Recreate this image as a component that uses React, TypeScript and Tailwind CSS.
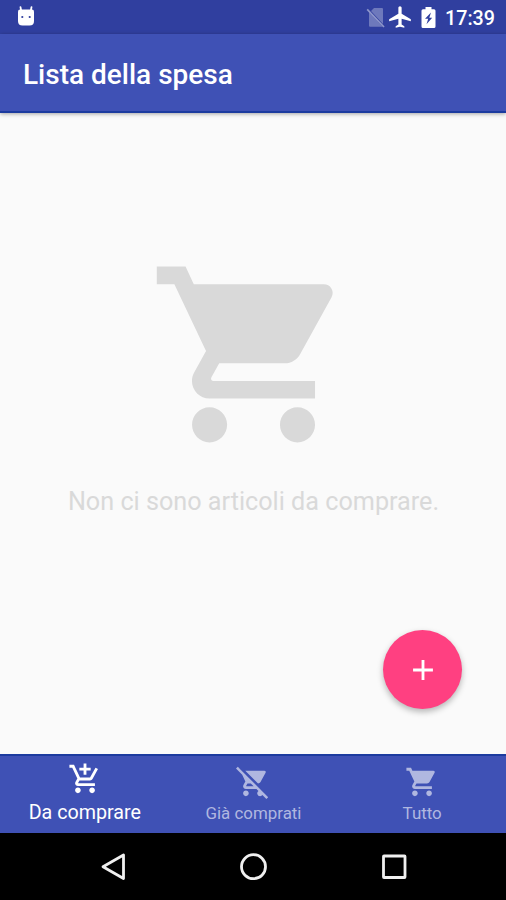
import type { ReactNode } from 'react';
import type { IconType } from 'react-icons';
import {
    MdAdd,
    MdAddShoppingCart,
    MdAirplanemodeActive,
    MdRemoveShoppingCart,
    MdShoppingCart,
} from 'react-icons/md';

interface Tab {
    label: string;
    icon: IconType;
}

const TABS: Tab[] = [
    { label: 'Da comprare', icon: MdAddShoppingCart },
    { label: 'Già comprati', icon: MdRemoveShoppingCart },
    { label: 'Tutto', icon: MdShoppingCart },
];

export default function App() {
    return (
        <div className="flex h-[900px] w-[506px] flex-col overflow-hidden bg-[#fafafa] font-['Roboto',sans-serif]">
            <StatusBar />
            <header className="z-10 flex h-[79px] shrink-0 items-center border-b-2 border-[#1c3b9f] bg-[#3f51b5] pl-[23px] pt-[5px] shadow-[0_1px_4px_rgba(0,0,0,0.35)]">
                <h1 className="text-[28px] font-medium leading-none text-white">Lista della spesa</h1>
            </header>
            <EmptyList message="Non ci sono articoli da comprare." />
            <nav className="grid h-[79px] shrink-0 grid-cols-3 border-t-2 border-[#1c3b9f] bg-[#3f51b5]">
                {TABS.map((tab, i) => (
                    <TabButton key={tab.label} tab={tab} active={i === 0} />
                ))}
            </nav>
            <SystemNav />
        </div>
    );
}

function StatusBar() {
    return (
        <div className="flex h-[34px] shrink-0 items-center justify-between bg-[#303f9f] pl-[17px] pr-[11px] text-white">
            <svg className="-mt-px h-[21px] w-[18px]" viewBox="0 0 18 21" fill="currentColor">
                <path d="M3.5 1.2 4.2 5M14.5 1.2 13.8 5" stroke="currentColor" strokeWidth="1.8" strokeLinecap="round" />
                <path d="M3 3.6h12q2 0 2 2v9.4q0 4.5-4.5 4.500H5.5Q1 19.5 1 15V5.6q0-2 2-2z" />
                <circle cx="5.3" cy="11" r="1.1" fill="#303f9f" />
                <circle cx="12.7" cy="11" r="1.1" fill="#303f9f" />
            </svg>
            <div className="flex items-center">
                <svg className="h-[21px] w-[19px]" viewBox="0 0 19 21">
                    <path d="M8 1h8q1 0 1 1v15L5 4zM3 5.5 16.5 19.8H4q-1 0-1-1z" fill="#fff" opacity=".3" />
                    <path d="M1.2 2.4 18 20" stroke="#fff" strokeWidth="1.7" opacity=".45" />
                </svg>
                <MdAirplanemodeActive className="ml-[2px] size-[26px]" />
                <svg className="ml-[8px] h-[21px] w-[15px]" viewBox="0 0 15 21" fill="currentColor">
                    <path d="M4.5 0h6v2.2H13q1.5 0 1.5 1.5v15.8q0 1.5-1.5 1.5H2Q.5 21 .5 19.5V3.7q0-1.5 1.5-1.5h2.5z" />
                    <path d="M10 5.5 4 11.8h3.2L5.5 17.2l5.7-6.4H8.3z" fill="#303f9f" />
                </svg>
                <span className="ml-[9px] mt-[3px] text-[19.7px] font-medium leading-none">17:39</span>
            </div>
        </div>
    );
}

function EmptyList({ message }: { message: string }) {
    return (
        <main className="relative flex flex-1 flex-col items-center pt-[136px]">
            <MdShoppingCart className="size-[211px] text-[#d9d9d9]" />
            <p className="mt-[29px] pl-px text-[25.2px] leading-[26px] text-[#d9d9d9]">{message}</p>
            <button
                aria-label="Aggiungi"
                className="absolute bottom-[45px] right-[44px] flex size-[79px] items-center justify-center rounded-full bg-[#ff4081] text-white shadow-[0_3px_6px_rgba(0,0,0,0.28)]"
            >
                <MdAdd className="size-[34px]" />
            </button>
        </main>
    );
}

function TabButton({ tab, active }: { tab: Tab; active: boolean }) {
    const Icon = tab.icon;

    return (
        <button
            className={`flex flex-col items-center pl-px ${
                active ? 'pt-[6px] text-white' : 'pt-[9px] text-[#b0b7e0]'
            }`}
        >
            <Icon className="size-[34px]" />
            <span className={`leading-5 ${active ? 'mt-[7px] text-[19.7px]' : 'mt-[4px] text-[16.9px]'}`}>
                {tab.label}
            </span>
        </button>
    );
}

/** Android back, home and recents keys. */
function SystemNav() {
    return (
        <div className="flex h-[67px] shrink-0 items-center justify-center gap-[107px] bg-black">
            <NavKey>
                <path d="M28.5 5v23.5L8 16.7z" />
            </NavKey>
            <NavKey>
                <circle cx="17.5" cy="16.7" r="12" />
            </NavKey>
            <NavKey>
                <rect x="6.5" y="6" width="21.5" height="21.5" rx=".5" />
            </NavKey>
        </div>
    );
}

function NavKey({ children }: { children: ReactNode }) {
    return (
        <svg
            className="size-[34px]"
            viewBox="0 0 34 34"
            fill="none"
            stroke="#f0f0f0"
            strokeWidth="2.8"
            strokeLinejoin="round"
        >
            {children}
        </svg>
    );
}
